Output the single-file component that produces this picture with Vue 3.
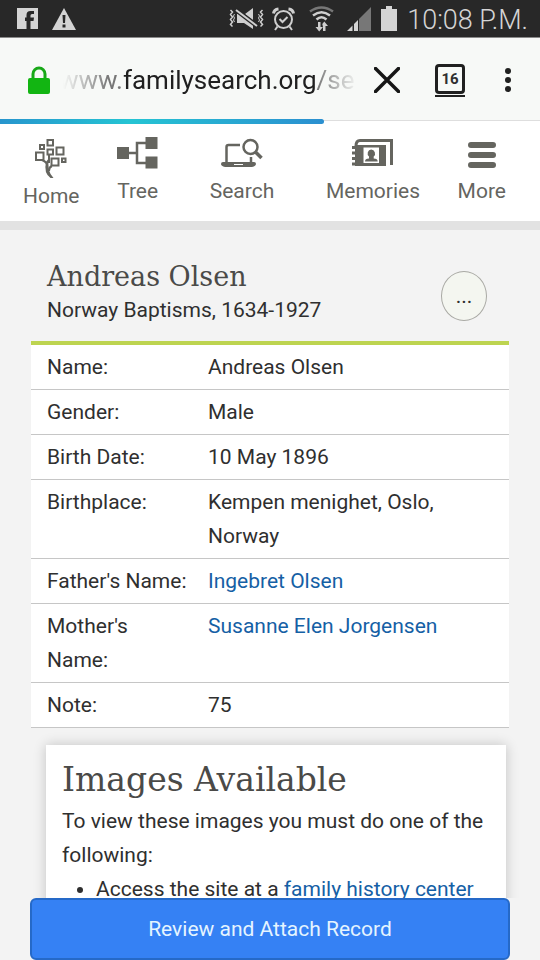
<script setup>
const record = [
  { label: 'Name:', value: 'Andreas Olsen' },
  { label: 'Gender:', value: 'Male' },
  { label: 'Birth Date:', value: '10 May 1896' },
  { label: 'Birthplace:', value: 'Kempen menighet, Oslo, Norway' },
  { label: "Father's Name:", value: 'Ingebret Olsen', link: true },
  { label: "Mother's Name:", value: 'Susanne Elen Jorgensen', link: true },
  { label: 'Note:', value: '75' }
]
</script>

<template>
  <div class="screen">
    <div class="status">
      <div class="status-group">
        <svg width="21" height="21" viewBox="0 0 21 21">
          <path fill="#d4d4d4" d="M0 0h21v21H0z" />
          <path fill="#282828" d="M9.500 21v-8H8V9.500h1.500V7q0-4 4-4H17v3h-2q-1.500 0-1.500 1.500v2H17l-.5 3.500h-3v8z" />
        </svg>
        <svg width="24" height="22" viewBox="0 0 24 22">
          <path fill="#d4d4d4" d="M12 0 24 22H0z" />
          <path fill="#282828" d="M10.500 7h3l-.5 8h-2zM10.500 16.500h3v3h-3z" />
        </svg>
      </div>
      <div class="status-group right">
        <svg class="mute" width="35" height="22" viewBox="0 0 35 22">
          <g fill="none" stroke="#cfcfcf" stroke-width="1.500">
            <path d="M1.500 2l2 2-2 2.500 2 2.500-2 2.500 2 2.500-2 2.500 2 2M33.500 2l-2 2 2 2.500-2 2.500 2 2.500-2 2.500 2 2.500-2 2" />
            <path d="M5.500 6l-1 2 1 2-1 2 1 2M29.500 6l1 2-1 2 1 2-1 2" stroke-width="1" />
          </g>
          <path fill="#cfcfcf" d="M8 6h4l12 11v4l-9-6H8zM16 6l8-6v12z" />
          <path d="m7 2 21 16" stroke="#282828" stroke-width="4.500" />
          <path d="m7 2 21 16" stroke="#cfcfcf" stroke-width="2" />
        </svg>
        <svg class="alarm" width="23" height="24" viewBox="0 0 23 24">
          <g fill="none" stroke="#cfcfcf" stroke-width="2">
            <circle cx="11.500" cy="12.500" r="8.500" />
            <path d="m7.500 12 3 3 5-5M5.500 19.500 3 23M17.500 19.500 20 23" />
            <path d="M1.500 6.500Q2 2.500 6.500 2M21.500 6.500Q21 2.500 16.500 2" stroke-width="3" />
          </g>
        </svg>
        <svg class="wifi" width="25" height="26" viewBox="0 0 25 26">
          <g fill="none" stroke-width="2.500">
            <path stroke="#777" d="M1 5.500q11.500-8 23 0" />
            <path stroke="#cfcfcf" d="M4 9.500q8.500-6.500 17 0M7.500 13.500q5-4.500 10 0" />
          </g>
          <path fill="#cfcfcf" d="M9 16h2.500v5H14l-3.800 4.500L6.500 21H9zM14 25h2.500v-5H19l-3.700-4.500-2 2.500.7 3z" />
        </svg>
        <svg class="signal" width="25" height="24" viewBox="0 0 25 24">
          <path fill="#777" d="M25 0v24H13V12z" />
          <path fill="#d4d4d4" d="M12 13v11H8v-7zM6.500 18.500V24H1z" />
        </svg>
        <svg class="battery" width="16" height="25" viewBox="0 0 16 25">
          <path fill="#d4d4d4" d="M5 0h6v3h5v22H0V3h5z" />
        </svg>
        <span class="time">10:08 P.M.</span>
      </div>
    </div>

    <div class="browser">
      <svg class="lock" width="22" height="28" viewBox="0 0 22 28">
        <path d="M5 13V8a6 6 0 0 1 12 0v5" fill="none" stroke="#18a818" stroke-width="3" />
        <rect y="12" width="22" height="16" rx="2" fill="#12b512" />
      </svg>
      <button class="url" aria-label="Address"><span>www.</span><b>familysearch.org</b><span>/se</span></button>
      <button class="tool" aria-label="Stop">
        <svg width="26" height="26" viewBox="0 0 26 26"><path d="M1.500 1.500 24.500 24.500M24.500 1.500 1.500 24.500" stroke="#161616" stroke-width="3.500" stroke-linecap="round" /></svg>
      </button>
      <button class="tabs" aria-label="Tabs"><span>16</span></button>
      <button class="tool dots" aria-label="Browser menu">
        <svg width="6" height="24" viewBox="0 0 6 24" fill="#202020"><circle cx="3" cy="3" r="3" /><circle cx="3" cy="12" r="3" /><circle cx="3" cy="21" r="3" /></svg>
      </button>
      <div class="progress"></div>
    </div>

    <nav class="nav">
      <a href="#home" class="home">
        <svg width="32" height="42" viewBox="0 -2 32 42">
          <g fill="none" stroke="#65655f" stroke-width="2">
            <rect x="12.500" y="1" width="5.500" height="5.500" /><rect x="5" y="6" width="4" height="4" />
            <rect x="1" y="13.500" width="7.500" height="7.500" /><rect x="12.500" y="10.500" width="5.500" height="5" />
            <rect x="21.500" y="8.500" width="7" height="7" /><rect x="16.500" y="19.500" width="7" height="7" />
            <rect x="27" y="19.500" width="3.500" height="3.500" />
            <path d="M7 21q5 2 5 5M14 16v8" />
            <path d="M17 27q-3 1-3 5" />
          </g>
          <path fill="#65655f" d="M11 23 14 19Q11.500 32 18.500 39h-3Q8.500 34 11 23z" />
        </svg>
        <span>Home</span>
      </a>
      <a href="#tree">
        <svg width="41" height="32" viewBox="0 0 41 32">
          <path fill="#65655f" d="M0 10h12v12H0zM28.500 0h12v12h-12zM28.500 19.500h12v12h-12z" />
          <path d="M12 16h8M29 6h-9v20h9" fill="none" stroke="#65655f" stroke-width="2.500" />
        </svg>
        <span>Tree</span>
      </a>
      <a href="#search" class="search">
        <svg width="42" height="32" viewBox="0 -2 42 32">
          <g fill="none" stroke="#65655f">
            <path d="M5.500 23V8q0-2 2-2H19M30 18v6" stroke-width="2.500" />
            <circle cx="29.500" cy="8" r="7" stroke-width="2.500" />
            <path d="m34.500 13 6 6" stroke-width="3.500" />
          </g>
          <path fill="#65655f" d="M0 25q0-2 2-2h31q2 0 2 2t-4 3H4q-4-1-4-3z" />
          <path d="M13 25.500h9" stroke="#fff" />
        </svg>
        <span>Search</span>
      </a>
      <a href="#memories">
        <svg width="42" height="32" viewBox="0 -1 42 32">
          <path d="M4 8q0-5.500 4-5.500h31.500V27" fill="none" stroke="#65655f" stroke-width="3" />
          <path fill="#65655f" d="M3 7h31v21H3zM0 8h4v3H0zM0 13.500h4v3H0zM0 19h4v3H0zM0 24.500h4v3H0z" />
          <path fill="#fff" d="M11.500 9.500H27v15.500H11.500z" />
          <path fill="#65655f" d="M19.200 11.500a4 4 0 0 1 2.500 7v2q4 0 4 3H13q0-3 4-3v-2a4 4 0 0 1 2.200-7z" />
        </svg>
        <span>Memories</span>
      </a>
      <a href="#more">
        <svg width="28" height="32" viewBox="0 -2 28 32"><path d="M3 6h22M3 16h22M3 26h22" stroke="#65655f" stroke-width="6" stroke-linecap="round" /></svg>
        <span>More</span>
      </a>
    </nav>

    <main>
      <header class="person">
        <div>
          <h1>Andreas Olsen</h1>
          <p>Norway Baptisms, 1634-1927</p>
        </div>
        <button class="options" aria-label="Options">...</button>
      </header>

      <table>
        <tbody>
          <tr v-for="row in record" :key="row.label">
            <th scope="row">{{ row.label }}</th>
            <td>
              <a v-if="row.link" href="#person">{{ row.value }}</a>
              <template v-else>{{ row.value }}</template>
            </td>
          </tr>
        </tbody>
      </table>

      <section class="images">
        <h2>Images Available</h2>
        <p>To view these images you must do one of the following:</p>
        <ul>
          <li>Access the site at a <a href="#centers">family history center</a></li>
        </ul>
      </section>
    </main>

    <button class="attach">Review and Attach Record</button>
  </div>
</template>

<style>
body {
  margin: 0;
  background: #f3f3f3;
}
</style>

<style scoped>
* {
  box-sizing: border-box;
}
.screen {
  height: 100vh;
  display: flex;
  flex-direction: column;
  font-family: Roboto, sans-serif;
  font-size: 21px;
  color: #2f2f2f;
  background: #f3f3f3;
}
svg {
  display: block;
  flex: none;
}
button {
  font: inherit;
  color: inherit;
  background: none;
  border: 0;
  padding: 0;
}
a {
  color: #1560a5;
  text-decoration: none;
}
h1,
h2,
p,
ul {
  margin: 0;
  padding: 0;
}
.status {
  flex: none;
  height: 38px;
  display: flex;
  justify-content: space-between;
  align-items: center;
  padding: 0 12px 0 17px;
  background: #282828;
  border-bottom: 1px solid #8a8a8a;
}
.status-group {
  display: flex;
  align-items: center;
  gap: 14px;
}
.right {
  gap: 8px;
}
.wifi {
  margin-left: 6px;
}
.signal {
  margin-left: 4px;
}
.battery {
  margin: 0 2px 0 2px;
}
.time {
  padding-top: 3px;
  font-size: 27px;
  font-weight: 300;
  line-height: 34px;
  color: #d4d4d4;
}
.browser {
  flex: none;
  position: relative;
  height: 83px;
  display: flex;
  align-items: center;
  padding: 1px 29px 0 28px;
  background: #f7f9f7;
  border-bottom: 1px solid #dedede;
}
.url {
  flex: 1;
  min-width: 0;
  margin: 0 12px 0 9px;
  font-size: 26px;
  line-height: 40px;
  text-align: left;
  white-space: nowrap;
  overflow: hidden;
  color: #777;
  mask-image: linear-gradient(90deg, transparent 4px, #000 50px, #000 calc(100% - 46px), transparent calc(100% - 4px));
}
.url b {
  font-weight: 400;
  color: #202020;
}
.tabs {
  width: 30px;
  height: 34px;
  margin: 0 40px 0 35px;
  border-bottom: 2px solid #202020;
}
.tabs span {
  display: block;
  height: 30px;
  border: 3px solid #202020;
  border-radius: 4px;
  font-size: 15px;
  font-weight: 700;
  line-height: 24px;
}
.progress {
  position: absolute;
  left: 0;
  bottom: -4px;
  width: 60%;
  height: 5px;
  border-radius: 0 3px 3px 0;
  background: linear-gradient(90deg, #2795cd, #25c4d3 40%, #2b8fd0);
}
.nav {
  flex: none;
  height: 109px;
  display: flex;
  justify-content: space-between;
  align-items: flex-start;
  padding: 16px 34px 0 23px;
  background: #fff;
  border-bottom: 9px solid #e2e2e2;
}
.nav a {
  display: flex;
  flex-direction: column;
  align-items: center;
  gap: 10px;
  line-height: 24px;
  color: #65655f;
}
.nav .home {
  gap: 5px;
}
.nav .search {
  margin: 0 14px;
}
main {
  flex: 1;
  min-height: 0;
  overflow: hidden;
  padding: 29px 31px 0;
}
.person {
  display: flex;
  justify-content: space-between;
  padding: 0 22px 16px 16px;
}
h1,
h2 {
  font-family: "DejaVu Serif", serif;
  font-weight: 400;
  color: #4a4a48;
}
h1 {
  font-size: 27px;
  line-height: 36px;
}
.person p {
  line-height: 30px;
}
.options {
  width: 46px;
  height: 50px;
  margin-top: 12px;
  border: 1px solid #a9a9a4;
  border-radius: 50%;
  background: #f4f6f0;
}
table {
  width: 100%;
  border-collapse: separate;
  border-spacing: 0;
  border-top: 4px solid #bdd450;
  background: #fff;
}
th,
td {
  padding: 5px 0;
  line-height: 34px;
  font-weight: 400;
  text-align: left;
  vertical-align: top;
  border-bottom: 1px solid #c6c6c6;
}
th {
  width: 177px;
  padding-left: 16px;
  padding-right: 20px;
}
td {
  padding-right: 50px;
}
.images {
  margin: 17px 3px 0 15px;
  padding: 15px 16px;
  background: #fff;
  box-shadow: 0 0 12px rgba(0, 0, 0, 0.2);
}
h2 {
  font-size: 33px;
  line-height: 40px;
  margin-bottom: 4px;
}
.images p,
li {
  line-height: 34px;
}
ul {
  padding-left: 34px;
}
.attach {
  flex: none;
  height: 62px;
  margin: 0 30px;
  color: #e4f4ff;
  background: #3581f4;
  border: 2px solid #2569c8;
  border-radius: 6px;
}
</style>
